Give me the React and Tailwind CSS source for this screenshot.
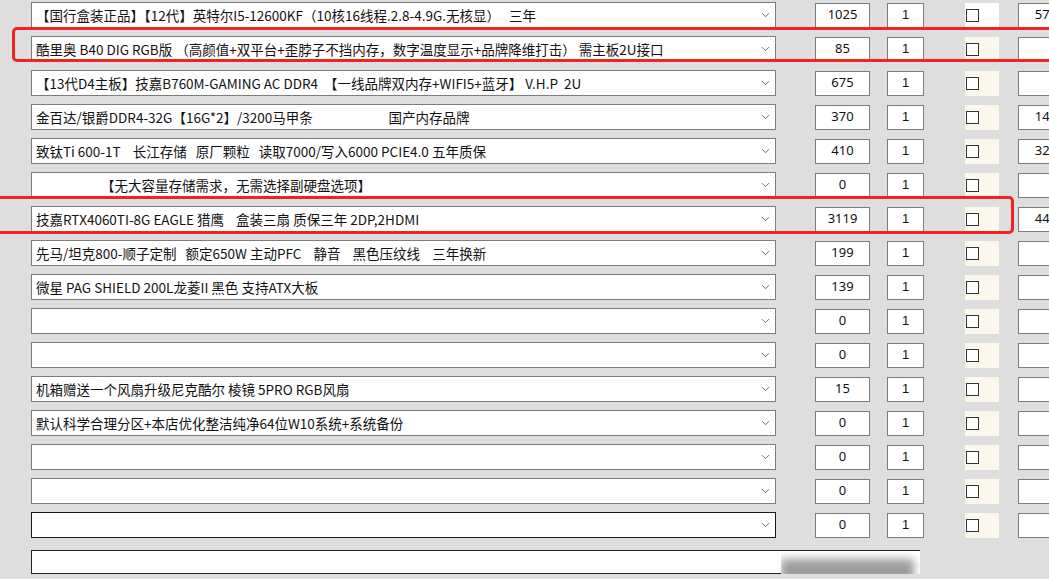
import React from 'react';

const rows = [
  { name: '【国行盒装正品】【12代】英特尔I5-12600KF（10核16线程.2.8-4.9G.无核显）   三年', price: '1025', extra: '576', white: true },
  { name: '酷里奥 B40 DIG RGB版 （高颜值+双平台+歪脖子不挡内存，数字温度显示+品牌降维打击） 需主板2U接口', price: '85', extra: '' },
  { name: '【13代D4主板】技嘉B760M-GAMING AC DDR4  【一线品牌双内存+WIFI5+蓝牙】 V.H.P  2U', price: '675', extra: '' },
  { name: '金百达/银爵DDR4-32G【16G*2】/3200马甲条                         国产内存品牌', price: '370', extra: '149' },
  { name: '致钛Ti 600-1T    长江存储   原厂颗粒   读取7000/写入6000 PCIE4.0 五年质保', price: '410', extra: '329' },
  { name: '【无大容量存储需求，无需选择副硬盘选项】', price: '0', extra: '', indent: true },
  { name: '技嘉RTX4060TI-8G EAGLE 猎鹰    盒装三扇 质保三年 2DP,2HDMI', price: '3119', extra: '449' },
  { name: '先马/坦克800-顺子定制   额定650W 主动PFC    静音    黑色压纹线    三年换新', price: '199', extra: '' },
  { name: '微星 PAG SHIELD 200L龙菱II 黑色 支持ATX大板', price: '139', extra: '' },
  { name: '', price: '0', extra: '' },
  { name: '', price: '0', extra: '' },
  { name: '机箱赠送一个风扇升级尼克酷尔 棱镜 5PRO RGB风扇', price: '15', extra: '' },
  { name: '默认科学合理分区+本店优化整洁纯净64位W10系统+系统备份', price: '0', extra: '' },
  { name: '', price: '0', extra: '' },
  { name: '', price: '0', extra: '' },
  { name: '', price: '0', extra: '', focused: true },
];

const Chevron = () => (
  <svg width="9" height="6" viewBox="0 0 9 6" className="shrink-0">
    <path d="M1 1.2l3.5 3.5L8 1.2" fill="none" stroke="#666" strokeWidth="1" />
  </svg>
);

const Row = ({ row }) => (
  <div className="flex items-center h-[34px] shrink-0">
    <div
      className={`flex items-center shrink-0 w-[745px] h-[26px] bg-white border pl-[4px] pr-[5px] ${
        row.focused ? 'border-[#1a1a1a]' : 'border-[#7d7d7d]'
      }`}
    >
      <span
        className={`flex-1 whitespace-pre overflow-hidden text-[13.5px] text-[#111] ${row.indent ? 'pl-[65px]' : ''}`}
        style={{ fontFamily: '"Noto Sans CJK SC", "Noto Sans", sans-serif' }}
      >
        {row.name}
      </span>
      <Chevron />
    </div>
    <div className="ml-[39px] shrink-0 w-[55px] h-[25px] bg-white border border-[#7d7d7d] flex items-center justify-center text-[13px] text-[#111] font-['Noto_Sans',sans-serif]">
      {row.price}
    </div>
    <div className="ml-[17px] shrink-0 w-[37px] h-[25px] bg-white border border-[#7d7d7d] flex items-center justify-center text-[13px] text-[#111] font-['Liberation_Sans',sans-serif]">
      1
    </div>
    <div className={`ml-[41px] shrink-0 w-[34px] h-[25px] flex items-center ${row.white ? 'bg-white' : 'bg-[#fbf7ec]'}`}>
      <div className="ml-[1px] w-[13px] h-[13px] border border-[#333] bg-white" />
    </div>
    <div className="ml-[19px] w-[56px] shrink-0 h-[25px] bg-white border border-[#7d7d7d] flex items-center justify-center text-[13px] text-[#111] font-['Noto_Sans',sans-serif]">
      {row.extra}
    </div>
  </div>
);

export default function App() {
  return (
    <div className="relative w-[1049px] h-[579px] overflow-hidden bg-[#dedede]">
      <div className="flex flex-col pl-[31px] -mt-[2px]">
        {rows.map((row, i) => (
          <Row key={i} row={row} />
        ))}
        <div className="flex shrink-0 mt-[8px] w-[889px] h-[24px]">
          <div className="w-[750px] shrink-0 bg-white border-l border-t border-b border-[#222]" />
          <div className="flex-1 border-t border-[#222] bg-white relative overflow-hidden">
            <div className="absolute left-0 right-[6px] top-[8px] h-[22px] bg-[#9c9c9c] blur-[4px]" />
          </div>
        </div>
      </div>

      <div className="absolute left-[12px] top-[27px] w-[1060px] h-[35px] border-[3px] border-[#ef2323] rounded-[5px]" />
      <div className="absolute left-[-10px] top-[196px] w-[1024px] h-[38px] border-[3px] border-[#ef2323] rounded-[5px]" />
    </div>
  );
}
